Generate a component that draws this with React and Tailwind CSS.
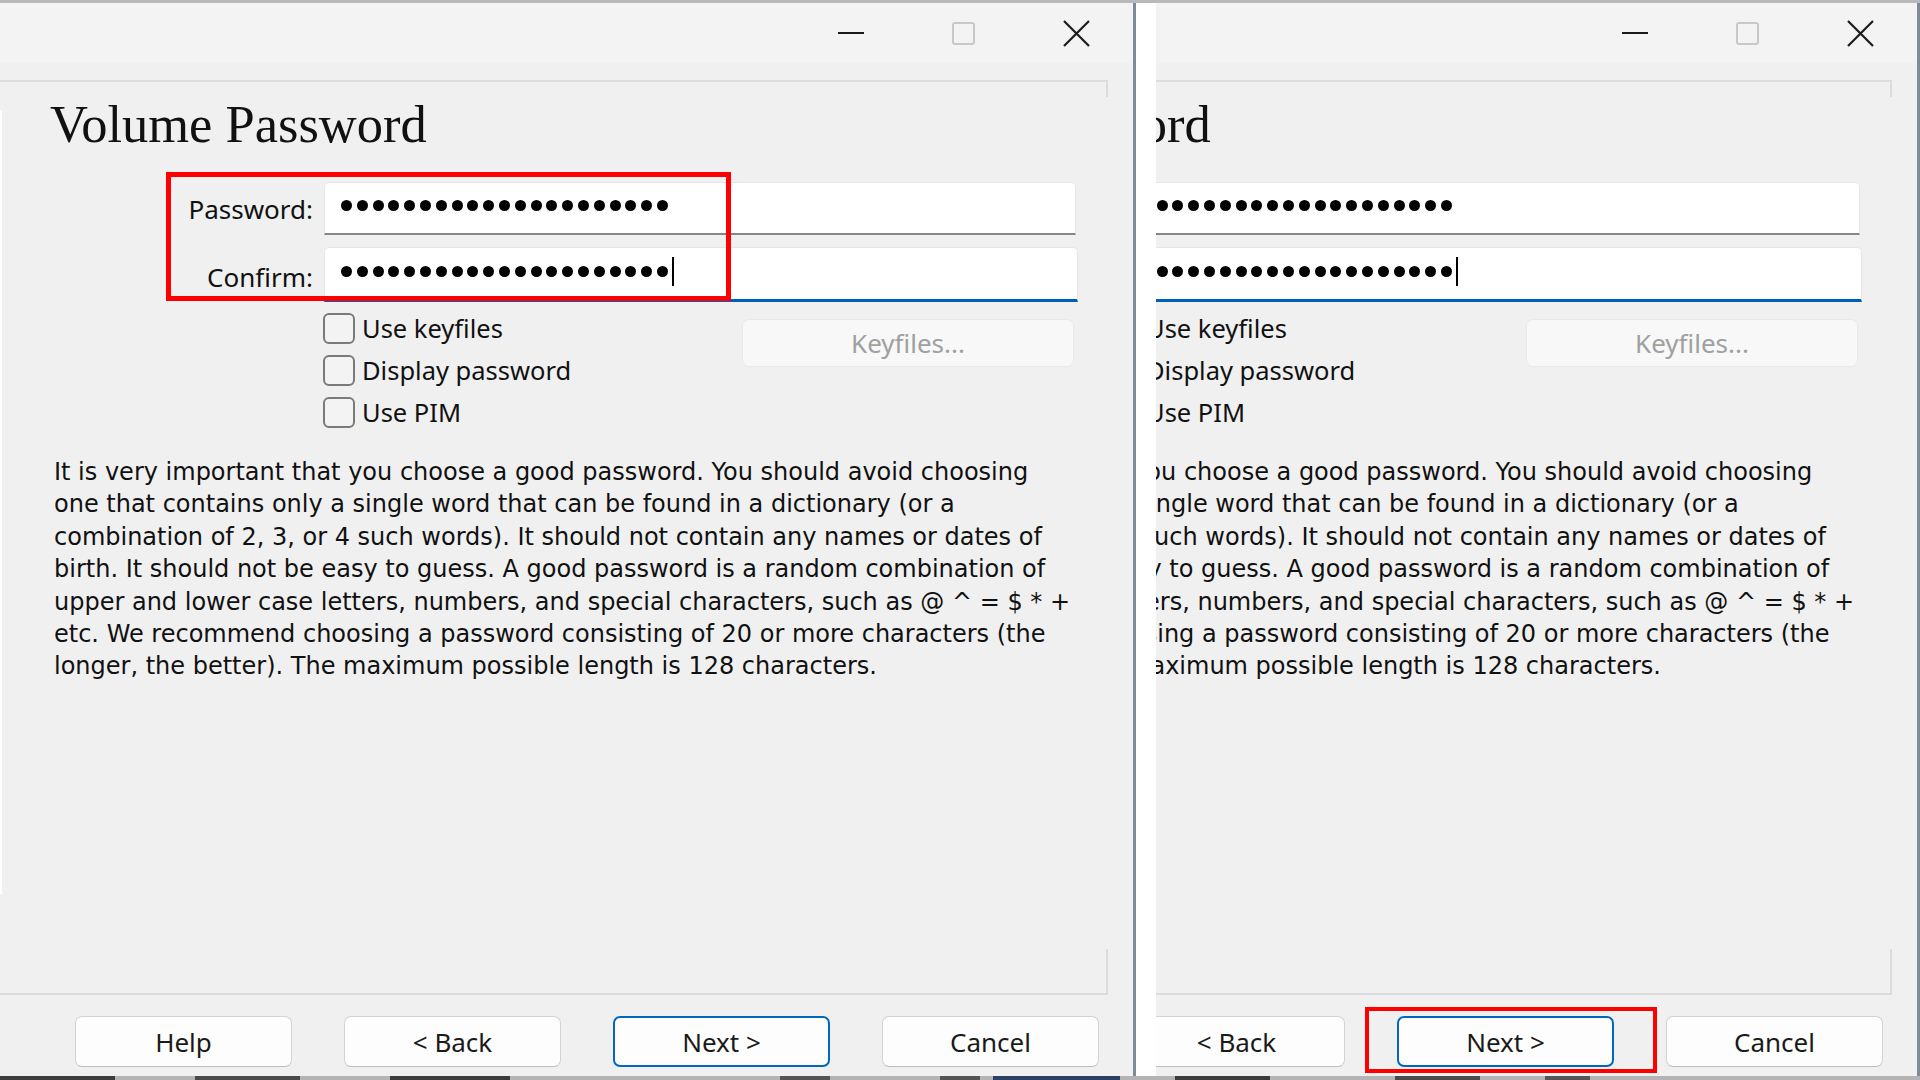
import React from "react";

const ui = "font-['Noto_Sans',sans-serif]";

const lines = [
    "It is very important that you choose a good password. You should avoid choosing",
    "one that contains only a single word that can be found in a dictionary (or a",
    "combination of 2, 3, or 4 such words). It should not contain any names or dates of",
    "birth. It should not be easy to guess. A good password is a random combination of",
    "upper and lower case letters, numbers, and special characters, such as @ ^ = $ * +",
    "etc. We recommend choosing a password consisting of 20 or more characters (the",
    "longer, the better). The maximum possible length is 128 characters.",
];

const Dots = ({ caret }) => (
    <div className="flex items-center gap-[4.8px] pl-[16px] pb-[5px] h-full">
        {Array.from({ length: 21 }).map((_, i) => (
            <span key={i} className="w-[11px] h-[11px] rounded-full bg-black shrink-0" />
        ))}
        {caret && <span className="-ml-[1px] w-[2px] h-[29px] bg-black shrink-0" />}
    </div>
);

const Check = ({ label }) => (
    <div className="flex items-center h-[31px] gap-[7px]">
        <span className="w-[32px] h-[31px] rounded-[6px] border-2 border-[#7a7a7a] bg-[#f3f3f3] shrink-0" />
        <span className={`${ui} text-[25.5px] text-[#111] leading-none whitespace-nowrap`}>{label}</span>
    </div>
);

const Button = ({ children, primary }) => (
    <button
        type="button"
        className={`w-[217px] h-[51px] rounded-[7px] bg-[#fdfdfd] ${ui} text-[26px] text-[#1a1a1a] leading-none flex items-center justify-center
            ${primary ? "border-2 border-[#0067c0]" : "border-[1.5px] border-[#d3d3d3] border-b-[#bdbdbd]"}`}
    >
        {children}
    </button>
);

const Window = ({ highlight }) => (
    <div className="relative w-[1136px] h-[1073px] shrink-0 flex flex-col bg-[#f0f0f0] border-r-[3px] border-[#7f8b98]">
        {/* title bar */}
        <div className="h-[60px] shrink-0 bg-[#f3f3f3] flex justify-end">
            <div className="w-[113px] flex items-center justify-center">
                <svg width="26" height="2"><rect width="26" height="2" fill="#1b1b1b" /></svg>
            </div>
            <div className="w-[113px] flex items-center justify-center">
                <div className="w-[23px] h-[23px] border-2 border-[#c8c8c8] rounded-[3px]" />
            </div>
            <div className="w-[113px] flex items-center justify-center">
                <svg width="27" height="27" viewBox="0 0 27 27">
                    <path d="M1 1 L26 26 M26 1 L1 26" stroke="#1b1b1b" strokeWidth="2.2" fill="none" />
                </svg>
            </div>
        </div>

        <div className="flex-1 flex flex-col pt-[17px]">
            {/* etched frame */}
            <div className="h-[915px] mr-[25px] flex border-y-2 border-[#dcdcdc]">
                <div className="w-[2px] flex flex-col">
                    <div className="h-[28px]" />
                    <div className="flex-1 bg-white" />
                    <div className="h-[99px]" />
                </div>

                <div className="flex-1 flex flex-col">
                    <h1 className="mt-[16px] pl-[48px] font-['Liberation_Serif',serif] text-[52.5px] leading-none text-[#111] whitespace-nowrap">
                        Volume Password
                    </h1>

                    <div className="mt-[31.5px] flex items-center h-[53px]">
                        <div className={`w-[311px] text-right ${ui} text-[26px] text-[#111] leading-none`}>Password:</div>
                        <div className="ml-[11px] w-[752px] h-[53px] bg-white rounded-t-[5px] border border-[#e6e6e6] border-b-2 border-b-[#868686]">
                            <Dots />
                        </div>
                    </div>

                    <div className="mt-[12px] flex items-center h-[55px]">
                        <div className={`w-[311px] text-right ${ui} text-[26px] text-[#111] leading-none pt-[4px]`}>Confirm:</div>
                        <div className="ml-[11px] w-[754px] h-[55px] bg-white rounded-t-[5px] border border-[#e6e6e6] border-b-[3px] border-b-[#005fb8]">
                            <Dots caret />
                        </div>
                    </div>

                    <div className="mt-[11px] flex">
                        <div className="w-[740px] pl-[321px] flex flex-col gap-[11px]">
                            <Check label="Use keyfiles" />
                            <Check label="Display password" />
                            <Check label="Use PIM" />
                        </div>
                        <div className={`mt-[6px] w-[332px] h-[48px] rounded-[7px] bg-[#f8f8f8] border border-[#e9e9e9] flex items-center justify-center ${ui} text-[26px] text-[#a0a0a0] leading-none`}>
                            Keyfiles...
                        </div>
                    </div>

                    <div className="mt-[28px] pl-[52px] font-['DejaVu_Sans',sans-serif] text-[24px] leading-[32.4px] text-[#111]">
                        {lines.map((l) => (
                            <div key={l} className="whitespace-nowrap">{l}</div>
                        ))}
                    </div>
                </div>

                <div className="w-[2px] flex flex-col">
                    <div className="h-[15px] bg-[#dcdcdc]" />
                    <div className="flex-1" />
                    <div className="h-[44px] bg-[#dcdcdc]" />
                </div>
            </div>

            {/* wizard buttons */}
            <div className="flex gap-[52px] pl-[75px] pt-[21px] pb-[9px]">
                <Button>Help</Button>
                <Button>&lt; Back</Button>
                <Button primary>Next &gt;</Button>
                <Button>Cancel</Button>
            </div>
        </div>

        {highlight === "fields" && (
            <div className="absolute left-[166px] top-[169px] w-[565px] h-[129px] border-[5px] border-[#ff0000]" />
        )}
        {highlight === "next" && (
            <div className="absolute left-[581px] top-[1004px] w-[292px] h-[66px] border-4 border-[#ff0000]" />
        )}
    </div>
);

export default function App() {
    return (
        <div className="w-[1920px] h-[1080px] flex flex-col bg-white overflow-hidden">
            <div className="h-[3px] shrink-0 bg-[#b9b9b9]" />
            <div className="flex h-[1073px] shrink-0">
                <Window highlight="fields" />
                <div className="w-[20px] shrink-0 bg-white" />
                <div className="w-[764px] shrink-0 overflow-hidden flex justify-end">
                    <Window highlight="next" />
                </div>
            </div>
            {/* sliver of the window underneath */}
            <div className="h-[4px] shrink-0 bg-[#b4b4b4] flex">
                <div className="w-[115px] bg-[#3c3c3c]" />
                <div className="ml-[80px] w-[105px] bg-[#4a4a4a]" />
                <div className="ml-[90px] w-[120px] bg-[#3c3c3c]" />
                <div className="ml-[270px] w-[50px] bg-[#555]" />
                <div className="ml-[110px] w-[40px] bg-[#555]" />
                <div className="ml-[13px] w-[127px] bg-[#2d3f63]" />
                <div className="ml-[55px] w-[95px] bg-[#3c3c3c]" />
                <div className="ml-[125px] w-[85px] bg-[#4a4a4a]" />
                <div className="ml-[65px] w-[45px] bg-[#555]" />
            </div>
        </div>
    );
}
